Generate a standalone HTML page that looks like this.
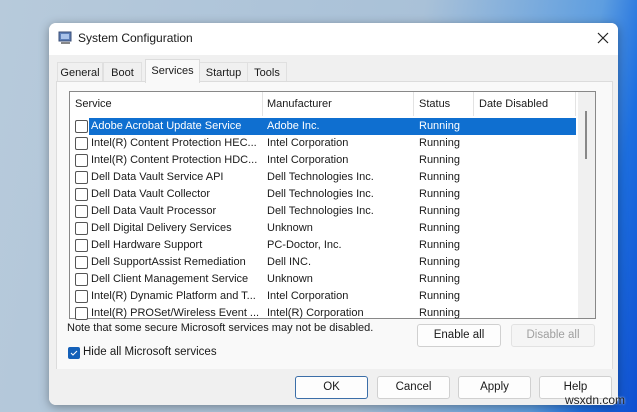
<!DOCTYPE html><html><head><style>
body{margin:0;width:637px;height:412px;overflow:hidden;position:relative;font-family:"Liberation Sans",sans-serif;font-size:11px;color:#1a1a1a;
background:linear-gradient(100deg,#b7cadb 0%,#a9c1d8 60%,#5e9ee0 85%,#1d6fe0 92%,#0f4fd0 100%);}
.dlg{position:absolute;left:49px;top:23px;width:569px;height:382px;background:#f0f0f0;border-radius:7px;box-shadow:0 2px 10px rgba(0,0,0,.35);overflow:hidden}
.title{position:absolute;left:0;top:0;width:100%;height:32px;background:#fff}
.t{position:absolute;white-space:nowrap}
.pane{position:absolute;left:7px;top:58px;width:555px;height:287px;background:#f9f9f9;border:1px solid #dcdcdc}
.tab{position:absolute;top:39px;height:19px;line-height:20px;text-align:center;background:#f0f0f0;border:1px solid #e0e0e0;border-bottom:none}
.list{position:absolute;left:20px;top:68px;width:525px;height:226px;background:#fff;border:1px solid #888}
.hdr{position:absolute;top:0;height:23px;line-height:23px}
.row{position:absolute;left:0;width:506px;height:17px;line-height:17px}
.cb{position:absolute;left:5px;top:2px;width:11px;height:11px;border:1px solid #555;border-radius:2px;background:#fff}
.btn{position:absolute;height:21px;line-height:21px;text-align:center;background:#fdfdfd;border:1px solid #d0d0d0;border-radius:3px;font-size:11.5px}
</style></head><body>
<div class="dlg">
<div class="title">
<svg style="position:absolute;left:9px;top:8px" width="14" height="14"><rect x="1" y="1" width="12" height="9" fill="#5c7fb8" stroke="#3a4d75"/><rect x="3" y="3" width="8" height="5" fill="#a9c3ea"/><rect x="3" y="11" width="9" height="2" fill="#888"/></svg>
<div class="t" style="left:29px;top:8px;font-size:12px">System Configuration</div>
<svg style="position:absolute;left:548px;top:9px" width="12" height="12"><path d="M1 1L11 11M11 1L1 11" stroke="#222" stroke-width="1.2"/></svg>
</div>
<div class="tab" style="left:8px;width:44px">General</div>
<div class="tab" style="left:54px;width:37px">Boot</div>
<div class="tab" style="left:150px;width:47px">Startup</div>
<div class="tab" style="left:198px;width:38px">Tools</div>
<div class="pane"></div>
<div class="tab" style="left:96px;top:36px;width:53px;height:23px;line-height:22px;background:#f9f9f9;border-color:#dcdcdc">Services</div>
<div class="list">
<div class="hdr" style="left:5px;top:1px">Service</div>
<div class="hdr" style="left:197px;top:1px">Manufacturer</div>
<div class="hdr" style="left:349px;top:1px">Status</div>
<div class="hdr" style="left:409px;top:1px">Date Disabled</div>
<div style="position:absolute;left:192px;top:0;width:1px;height:24px;background:#e3e3e3"></div>
<div style="position:absolute;left:343px;top:0;width:1px;height:24px;background:#e3e3e3"></div>
<div style="position:absolute;left:403px;top:0;width:1px;height:24px;background:#e3e3e3"></div>
<div style="position:absolute;left:505px;top:0;width:1px;height:24px;background:#e3e3e3"></div>
<div style="position:absolute;left:508px;top:0;width:17px;height:226px;background:#f0f0f0"></div>
<div style="position:absolute;left:515px;top:19px;width:2px;height:48px;background:#888"></div>
<div id="rows"></div>
</div>
<div class="t" style="left:18px;top:299px">Note that some secure Microsoft services may not be disabled.</div>
<div style="position:absolute;left:19px;top:324px;width:12px;height:12px;background:#1460b8;border-radius:2px"><svg width="12" height="12"><path d="M3 6l2 2 4-4" stroke="#fff" fill="none"/></svg></div>
<div class="t" style="left:34px;top:323px;font-size:11.5px">Hide all Microsoft services</div>
<div class="btn" style="left:368px;top:301px;width:82px">Enable all</div>
<div class="btn" style="left:462px;top:301px;width:82px;color:#a0a0a0;background:#f5f5f5;border-color:#e2e2e2">Disable all</div>
<div style="position:absolute;left:0;top:346px;width:569px;height:36px;background:#f0f0f0"></div>
<div class="btn" style="left:246px;top:353px;width:71px;border:1px solid #3b6ea8">OK</div>
<div class="btn" style="left:328px;top:353px;width:71px">Cancel</div>
<div class="btn" style="left:409px;top:353px;width:71px">Apply</div>
<div class="btn" style="left:490px;top:353px;width:71px">Help</div>
</div>
<div class="t" style="left:565px;top:393px;font-size:12px;color:#222;text-shadow:0 0 2px #fff">wsxdn.com</div>
<script>
var d=[["Adobe Acrobat Update Service","Adobe Inc."],["Intel(R) Content Protection HEC...","Intel Corporation"],["Intel(R) Content Protection HDC...","Intel Corporation"],["Dell Data Vault Service API","Dell Technologies Inc."],["Dell Data Vault Collector","Dell Technologies Inc."],["Dell Data Vault Processor","Dell Technologies Inc."],["Dell Digital Delivery Services","Unknown"],["Dell Hardware Support","PC-Doctor, Inc."],["Dell SupportAssist Remediation","Dell INC."],["Dell Client Management Service","Unknown"],["Intel(R) Dynamic Platform and T...","Intel Corporation"],["Intel(R) PROSet/Wireless Event ...","Intel(R) Corporation"]];
var h="";d.forEach(function(r,i){var s=i==0;h+='<div class="row" style="top:'+(26+i*17)+'px"><div class="cb"></div>'+(s?'<div style="position:absolute;left:19px;top:0;width:487px;height:17px;background:#0f6fd0"></div>':'')+'<div class="t" style="left:21px;'+(s?'color:#fff':'')+'">'+r[0]+'</div><div class="t" style="left:197px;'+(s?'color:#fff':'')+'">'+r[1]+'</div><div class="t" style="left:349px;'+(s?'color:#fff':'')+'">Running</div></div>'});
document.getElementById("rows").innerHTML=h;
</script>
</body></html>
